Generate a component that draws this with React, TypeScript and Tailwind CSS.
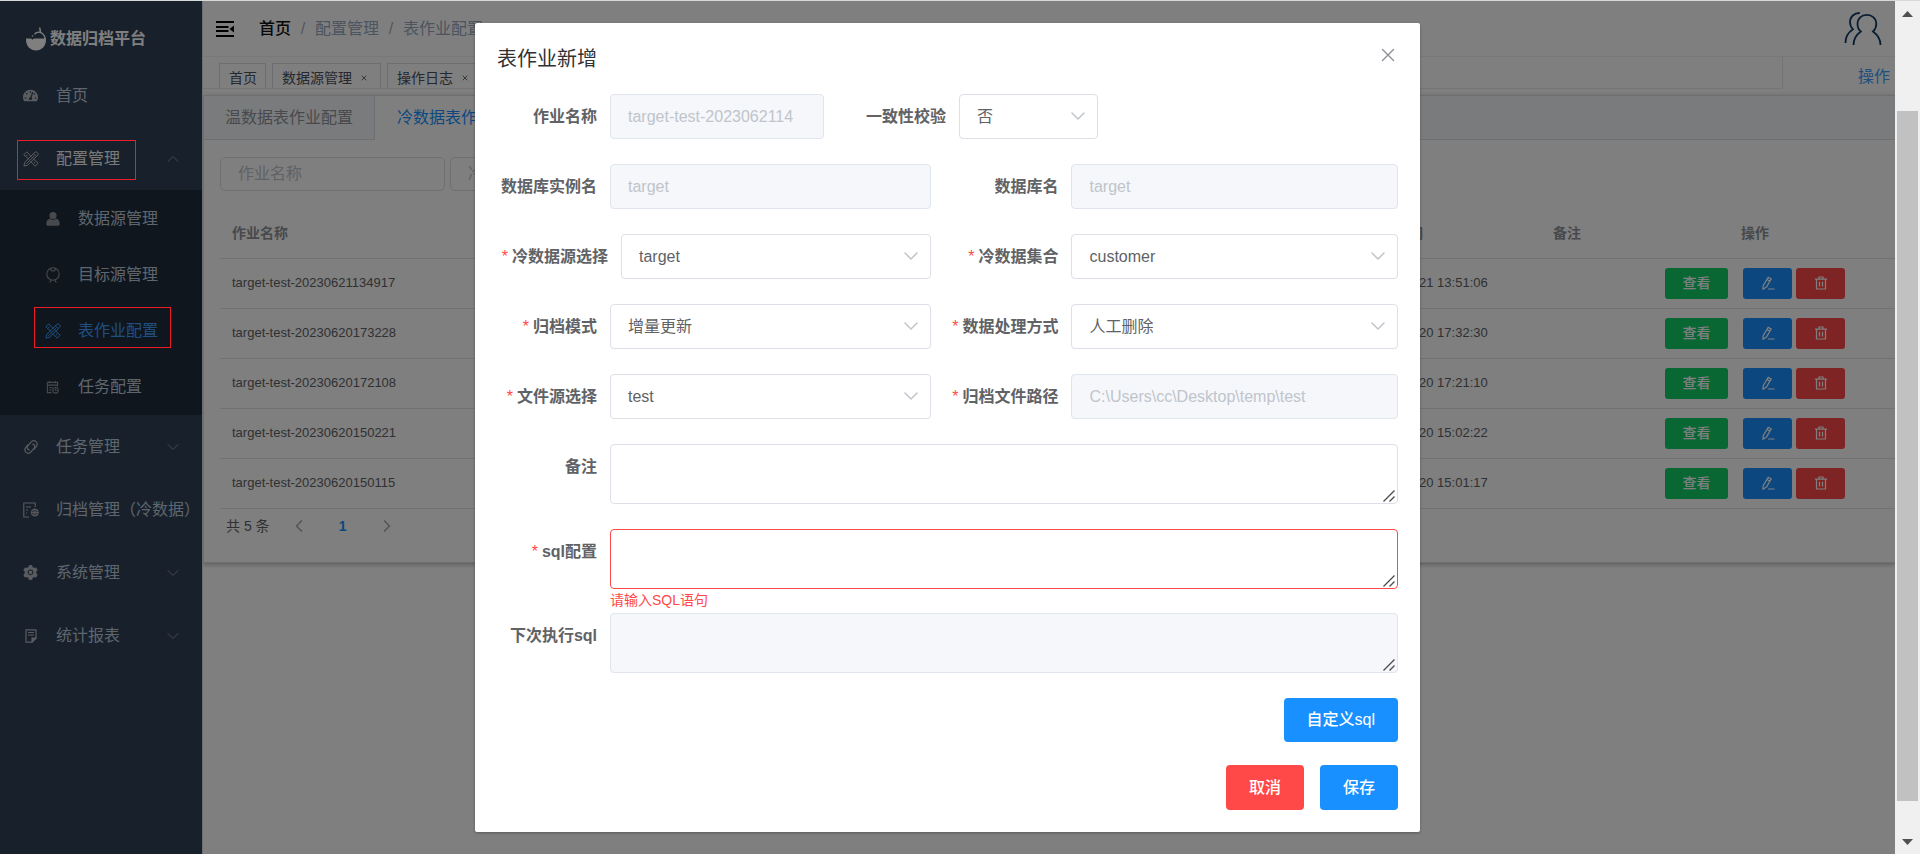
import React from "react";
import { FaTachometerAlt } from "react-icons/fa";
import { AiFillSetting } from "react-icons/ai";
import { ChevronDown, ChevronLeft, ChevronRight, ChevronUp, X } from "lucide-react";

/* ---------- icons ---------- */

type IconProps = { className?: string };

function LogoIcon() {
  return (
    <svg viewBox="0 0 20 26" className="h-[26px] w-5 shrink-0 text-white" fill="currentColor" aria-hidden="true">
      <path d="M0 12.500h5.200l1.200 1.200 1.300-1.200H20c.4 7-4 12-10 12s-10.400-5-10-12Z" />
      <path d="M8.500 8.200c2.500-2.800 6-2.800 8.300-.3 1.200 1.300 1.900 2.500 2.300 3.700l-.6 1.400" fill="none" stroke="currentColor" strokeWidth="1.300" />
      <path d="M14.500 6.300 13.700 1.500" fill="none" stroke="currentColor" strokeWidth="1.500" />
      <circle cx="6.500" cy="10" r=".8" />
    </svg>
  );
}

function ToolsIcon({ className }: IconProps) {
  return (
    <svg viewBox="0 0 16 16" className={className} fill="none" stroke="currentColor" strokeWidth="1" strokeLinejoin="round" aria-hidden="true">
      <path d="M6.200 8.600.8 3.800 3.800.8l4.600 5M9.800 7.400l5.400 4.800-3 3-4.800-5.200M3.200 5l1.200-1.200M10.900 12.200l1.300-1.200" />
      <path d="M12 1.200a1.300 1.300 0 0 1 1.800 0l1 1a1.300 1.300 0 0 1 0 1.800L4.700 14.200.9 15.100l.9-3.800L12 1.200ZM10.400 2.800l2.800 2.800M3.300 12.800l8-8" />
    </svg>
  );
}

function UserIcon({ className }: IconProps) {
  return (
    <svg viewBox="0 0 14 14" className={className} fill="currentColor" aria-hidden="true">
      <circle cx="7" cy="3.700" r="3.600" />
      <path d="M.3 12c0-3 1.500-4.900 3.300-5.200 2 1.500 4.800 1.500 6.800 0 1.800.3 3.300 2.200 3.300 5.200 0 1.100-.6 1.800-1.600 1.800H1.900C.9 13.800.3 13.100.3 12Z" />
    </svg>
  );
}

function MedalIcon({ className }: IconProps) {
  return (
    <svg viewBox="0 0 14 16" className={className} fill="none" stroke="currentColor" strokeWidth="1.100" strokeLinecap="round" aria-hidden="true">
      <circle cx="7" cy="7" r="6.200" />
      <path d="M4.800 1.300v1.500c.5 1.500 3.900 1.500 4.400 0V1.300M5 13l-1 2.300M9 13l1 2.300" />
    </svg>
  );
}

function ScheduleIcon({ className }: IconProps) {
  return (
    <svg viewBox="0 0 14 14" className={className} fill="none" stroke="currentColor" strokeWidth="1.200" aria-hidden="true">
      <path d="M6 12.500H1.500v-11h11V6M1.500 4.500h11M4 0v2.500M10 0v2.500M3.500 7.200H7M3.500 9.800h2" />
      <circle cx="10.200" cy="10" r="3" />
      <path d="M10.200 8.300V10h1.500" />
    </svg>
  );
}

function ClipIcon({ className }: IconProps) {
  return (
    <svg viewBox="0 0 14 14" className={className} fill="none" stroke="currentColor" strokeWidth="1.200" strokeLinecap="round" aria-hidden="true">
      <path d="M5.200 9.900C3.200 9.600 2.600 7.200 4 5.600l2.800-3.300c1.500-1.700 3.700-1.900 5.200-.7s1.600 3.300.2 5l-2 2.400" />
      <path d="M8.800 4.100c2 .3 2.600 2.700 1.200 4.300l-2.800 3.300c-1.500 1.700-3.700 1.900-5.200.7s-1.600-3.300-.2-5l2-2.400" />
    </svg>
  );
}

function ArchiveIcon({ className }: IconProps) {
  return (
    <svg viewBox="0 0 16 16" className={className} fill="none" stroke="currentColor" strokeWidth="1.100" aria-hidden="true">
      <path d="M6 15H.8V1h11.400v4M3 5h5M3 8h2M3 11h1" />
      <circle cx="11.800" cy="10.500" r="3.200" />
      <path d="M7.800 10.500h8M11.800 6.300v8.200M9.200 7.800l5.200 5.400M14.400 7.800l-5.200 5.400" strokeWidth=".9" />
    </svg>
  );
}

function NoteIcon({ className }: IconProps) {
  return (
    <svg viewBox="0 0 12 14" className={className} fill="none" stroke="currentColor" strokeWidth="1.200" aria-hidden="true">
      <path d="M1 .8h10v8.400L7 13.200H1V.8ZM3 3.500h6M3 6h6" />
      <path d="M7 13V9h4Z" fill="currentColor" />
    </svg>
  );
}

function FoldIcon() {
  return (
    <svg viewBox="0 0 18 16" className="h-4 w-[18px]" fill="none" stroke="currentColor" strokeWidth="2" aria-hidden="true">
      <path d="M0 1h18M0 6h12.500M0 10h12.500M0 15h18" />
      <path d="m18 4.500-4.500 3.500 4.500 3.500Z" fill="currentColor" stroke="none" />
    </svg>
  );
}

function PeopleIcon() {
  return (
    <svg viewBox="0 0 38 34" className="h-[34px] w-[38px]" fill="none" stroke="currentColor" strokeWidth="1.800" aria-hidden="true">
      <path d="M9.500 33c0-6 2.500-10 7.300-13.500-2.300-2-3.300-4.500-3.300-7.500 0-5.500 4-9.200 9.300-9.200S32.300 6.500 32.300 12c0 3-1.100 5.500-3.300 7.500C33.800 23 36.500 27 36.500 33" />
      <path d="M15.800 1C10.300.800 6 4.800 6 10c0 3 1 5.300 3 7.300C4 20.500 1.500 25 1.500 31" />
    </svg>
  );
}

function PenIcon() {
  return (
    <svg viewBox="0 0 14 14" className="size-[14px]" fill="none" stroke="currentColor" strokeWidth="1.200" aria-hidden="true">
      <path d="M7.200 1.200 10.200 2.900 5.500 11 2 13.200l.2-3.500 5-8.500ZM6 3.500l2.900 1.700M7 13h6.500" />
    </svg>
  );
}

function TrashIcon() {
  return (
    <svg viewBox="0 0 14 14" className="size-[14px]" fill="none" stroke="currentColor" strokeWidth="1.200" aria-hidden="true">
      <path d="M1 3.200h12M5 3V1h4v2M2.500 3.200v9.800h9V3.200M5.500 5.800v4.700M8.500 5.800v4.700" />
    </svg>
  );
}

/* ---------- side bar ---------- */

function Highlight({ className }: { className: string }) {
  return <span className={`pointer-events-none absolute z-30 border border-[#ee1c24] ${className}`} />;
}

type NavProps = {
  label: string;
  icon: React.ReactNode;
  arrow?: "up" | "down";
  active?: boolean;
  highlighted?: boolean;
};

function NavItem({ label, icon, arrow, active, highlighted }: NavProps) {
  return (
    <li>
      <a href="#" className={`relative flex h-[63px] items-center pl-[22px] whitespace-nowrap ${active ? "text-[#f4f4f5]" : "text-[#bfcbd9]"}`}>
        <span className="mr-[17px] flex w-[17px] justify-center text-[#b4b8bf]">{icon}</span>
        {label}
        {arrow === "up" && <ChevronUp className="mr-[19px] ml-auto size-5 text-[#909399]" strokeWidth={1.2} />}
        {arrow === "down" && <ChevronDown className="mr-[19px] ml-auto size-5 text-[#909399]" strokeWidth={1.2} />}
        {highlighted && <Highlight className="top-[13px] left-[17px] h-10 w-[119px]" />}
      </a>
    </li>
  );
}

function SubItem({ label, icon, active }: NavProps) {
  return (
    <li>
      <a href="#" className={`relative flex h-14 items-center pl-11 ${active ? "text-[#409eff]" : "text-[#bfcbd9]"}`}>
        <span className={`mr-[17px] flex w-[17px] justify-center ${active ? "text-[#409eff]" : "text-[#909399]"}`}>{icon}</span>
        {label}
        {active && <Highlight className="top-1 left-[34px] h-[41px] w-[137px]" />}
      </a>
    </li>
  );
}

function Sidebar() {
  return (
    <aside className="w-[202px] shrink-0 bg-[#304156]">
      <div className="flex h-[63px] items-center gap-1 pt-3 pl-[26px] font-bold text-white">
        <LogoIcon />
        数据归档平台
      </div>
      <nav>
        <ul>
          <NavItem label="首页" icon={<FaTachometerAlt className="size-[15px]" />} />
          <NavItem label="配置管理" icon={<ToolsIcon className="size-4" />} arrow="up" active highlighted />
          <li>
            <ul className="bg-[#1f2d3d] pt-px">
              <SubItem label="数据源管理" icon={<UserIcon className="size-[14px]" />} />
              <SubItem label="目标源管理" icon={<MedalIcon className="h-4 w-[14px]" />} />
              <SubItem label="表作业配置" icon={<ToolsIcon className="size-4" />} active />
              <SubItem label="任务配置" icon={<ScheduleIcon className="size-[13px]" />} />
            </ul>
          </li>
          <NavItem label="任务管理" icon={<ClipIcon className="size-[14px]" />} arrow="down" />
          <NavItem label="归档管理（冷数据）" icon={<ArchiveIcon className="size-4" />} />
          <NavItem label="系统管理" icon={<AiFillSetting className="size-[17px]" />} arrow="down" />
          <NavItem label="统计报表" icon={<NoteIcon className="h-[14px] w-3" />} arrow="down" />
        </ul>
      </nav>
    </aside>
  );
}

/* ---------- main area ---------- */

const rows = [
  { name: "target-test-20230621134917", time: "2023-06-21 13:51:06" },
  { name: "target-test-20230620173228", time: "2023-06-20 17:32:30" },
  { name: "target-test-20230620172108", time: "2023-06-20 17:21:10" },
  { name: "target-test-20230620150221", time: "2023-06-20 15:02:22" },
  { name: "target-test-20230620150115", time: "2023-06-20 15:01:17" },
];

function Tag({ label, closable }: { label: string; closable?: boolean }) {
  return (
    <a href="#" className={`flex h-[25px] items-center gap-2 border border-b-0 border-[#d8dce5] pt-[3px] pl-[9px] text-sm text-[#495060] ${closable ? "pr-3" : "pr-2"}`}>
      {label}
      {closable && <X className="size-2" strokeWidth={2.5} />}
    </a>
  );
}

function TopBar() {
  return (
    <header>
      <div className="flex h-[55px] items-center pr-[13px] pl-[13px]">
        <button type="button" aria-label="折叠菜单" className="text-black">
          <FoldIcon />
        </button>
        <ol className="ml-[25px] flex items-center whitespace-nowrap text-[#97a8be]">
          <li className="font-medium text-[#101113]">首页</li>
          <li className="w-[24px] text-center text-[#a8abb2]">/</li>
          <li>配置管理</li>
          <li className="w-[24px] text-center text-[#a8abb2]">/</li>
          <li>表作业配置</li>
        </ol>
        <button type="button" aria-label="用户" className="ml-auto text-[#123c66]">
          <PeopleIcon />
        </button>
      </div>
      <div className="flex border-t border-[#f0f0f0]">
        <div className="flex h-8 flex-1 items-end gap-[6px] border-r border-b border-[#e6e8ec] pl-4">
          <Tag label="首页" />
          <Tag label="数据源管理" closable />
          <Tag label="操作日志" closable />
        </div>
        <div className="flex h-8 w-[112px] items-center justify-end pt-2 pr-[5px] whitespace-nowrap">
          <a href="#" className="text-[#409eff]">操作</a>
        </div>
      </div>
    </header>
  );
}

function JobTable() {
  return (
    <table className="mt-[17px] w-full table-fixed text-left text-[13px] text-[#606266]">
      <colgroup>
        <col />
        <col className="w-[186px]" />
        <col className="w-[74px]" />
        <col className="w-[280px]" />
      </colgroup>
      <thead>
        <tr className="h-[50px] border-b border-[#dfe6ec] text-sm text-[#909399]">
          <th className="pl-3">作业名称</th>
          <th className="pl-3">创建时间</th>
          <th className="pl-3">备注</th>
          <th className="text-center">操作</th>
        </tr>
      </thead>
      <tbody>
        {rows.map((row) => (
          <tr key={row.name} className="h-[50px] border-b border-[#dfe6ec]">
            <td className="pl-3">{row.name}</td>
            <td className="pl-3">{row.time}</td>
            <td />
            <td>
              <div className="flex justify-center text-sm text-white">
                <button type="button" className="mr-[15px] h-[31px] w-[63px] rounded-[3px] bg-[#13ce66] font-medium">查看</button>
                <button type="button" aria-label="编辑" className="mr-1 flex h-[31px] w-[49px] items-center justify-center rounded-[3px] bg-[#1890ff]">
                  <PenIcon />
                </button>
                <button type="button" aria-label="删除" className="flex h-[31px] w-[49px] items-center justify-center rounded-[3px] bg-[#ff4949]">
                  <TrashIcon />
                </button>
              </div>
            </td>
          </tr>
        ))}
      </tbody>
    </table>
  );
}

function MainPanel() {
  return (
    <main className="min-w-0 flex-1 overflow-hidden border-l border-[#dcdfe6] bg-white">
      <TopBar />
      <section className="mt-[6px] border border-r-0 border-[#dcdfe6] shadow-[0_2px_4px_rgba(0,0,0,0.2),0_0_6px_rgba(0,0,0,0.1)]">
        <div className="flex border-b border-[#dcdfe6] bg-[#f5f7fa]">
          <button type="button" className="h-[43px] px-[21px] text-[#909399]">温数据表作业配置</button>
          <button type="button" className="-mb-px h-11 border-x border-[#dcdfe6] bg-white px-[22px] text-[#1890ff]">冷数据表作业配置</button>
        </div>
        <div className="pt-[17px] pl-4">
          <div className="flex gap-[5px]">
            <input aria-label="作业名称" placeholder="作业名称" className="h-[34px] w-[225px] rounded-[5px] border border-[#dcdfe6] px-[17px] placeholder:text-[#c0c4cc]" />
            <input aria-label="冷数据源" placeholder="冷数据源" className="h-[34px] w-[225px] rounded-[5px] border border-[#dcdfe6] px-[17px] placeholder:text-[#c0c4cc]" />
          </div>
          <JobTable />
          <div className="flex h-[53px] items-start pt-[7px] pl-[6px] text-sm text-[#606266]">
            <span>共 5 条</span>
            <button type="button" aria-label="上一页" className="ml-[21px] flex h-5 w-4 items-center justify-center text-[#a8abb2]"><ChevronLeft className="size-5 shrink-0" /></button>
            <button type="button" className="mx-[26px] w-5 text-center font-bold text-[#1890ff]">1</button>
            <button type="button" aria-label="下一页" className="flex h-5 w-4 items-center justify-center text-[#a8abb2]"><ChevronRight className="size-5 shrink-0" /></button>
          </div>
        </div>
      </section>
    </main>
  );
}

/* ---------- dialog ---------- */

type FieldProps = {
  id: string;
  label: string;
  required?: boolean;
  labelClass?: string;
  children: React.ReactNode;
};

function Field({ id, label, required, labelClass = "w-[113px]", children }: FieldProps) {
  return (
    <div className="flex min-w-0">
      <label htmlFor={id} className={`shrink-0 pr-[13px] text-right leading-[45px] font-bold whitespace-nowrap text-[#606266] ${labelClass}`}>
        {required && <span className="mr-1 font-normal text-[#ff4949]">*</span>}
        {label}
      </label>
      {children}
    </div>
  );
}

function DisabledInput({ id, value, className = "flex-1" }: { id: string; value: string; className?: string }) {
  return (
    <input
      id={id}
      disabled
      defaultValue={value}
      className={`h-[45px] min-w-0 rounded-[4px] border border-[#dfe4ed] bg-[#f5f7fa] px-[17px] text-[#c0c4cc] ${className}`}
    />
  );
}

function Select({ id, value, className = "flex-1" }: { id: string; value: string; className?: string }) {
  return (
    <div className={`relative min-w-0 ${className}`}>
      <select id={id} className="h-[45px] w-full appearance-none rounded-[4px] border border-[#dcdfe6] bg-white px-[17px] text-[#606266]">
        <option>{value}</option>
      </select>
      <ChevronDown className="pointer-events-none absolute top-[10px] right-2 size-6 text-[#c0c4cc]" strokeWidth={1.5} />
    </div>
  );
}

type TextAreaProps = { id: string; className: string; disabled?: boolean; describedBy?: string };

function TextArea({ id, className, disabled, describedBy }: TextAreaProps) {
  return (
    <div className="relative min-w-0 flex-1">
      <textarea id={id} disabled={disabled} aria-describedby={describedBy} className={`block h-[60px] w-full resize-none rounded-[4px] border px-[17px] py-2 ${className}`} />
      <svg viewBox="0 0 12 12" className="pointer-events-none absolute right-[3px] bottom-[2px] size-3" fill="none" stroke="#4a4a4a" strokeWidth="1.300" aria-hidden="true">
        <path d="M.5 11.500 11.500.5M6.500 11.500l5-5" />
      </svg>
    </div>
  );
}

function Dialog() {
  return (
    <div role="dialog" aria-label="表作业新增" className="relative mt-[22px] w-[945px] rounded-[2px] bg-white px-[22px] pb-[22px] shadow-[0_1px_3px_rgba(0,0,0,0.3)]">
      <div className="flex h-[71px] justify-between pt-[22px]">
        <h2 className="text-xl leading-7 text-[#303133]">表作业新增</h2>
        <button type="button" aria-label="关闭" className="flex h-5 w-5 items-center justify-center text-[#909399]">
          <X className="size-[22px] shrink-0" strokeWidth={1.5} />
        </button>
      </div>

      <form className="flex flex-col gap-[25px]">
        <div className="flex">
          <Field id="job-name" label="作业名称">
            <DisabledInput id="job-name" value="target-test-2023062114" className="w-[214px]" />
          </Field>
          <Field id="check" label="一致性校验" labelClass="w-[135px]">
            <Select id="check" value="否" className="w-[139px]" />
          </Field>
        </div>

        <div className="grid grid-cols-[434fr_450fr] gap-x-4 gap-y-[25px]">
          <Field id="instance" label="数据库实例名">
            <DisabledInput id="instance" value="target" />
          </Field>
          <Field id="database" label="数据库名" labelClass="w-[124px]">
            <DisabledInput id="database" value="target" />
          </Field>
          <Field id="cold-source" label="冷数据源选择" required labelClass="w-[124px]">
            <Select id="cold-source" value="target" />
          </Field>
          <Field id="collection" label="冷数据集合" required labelClass="w-[124px]">
            <Select id="collection" value="customer" />
          </Field>
          <Field id="mode" label="归档模式" required>
            <Select id="mode" value="增量更新" />
          </Field>
          <Field id="handling" label="数据处理方式" required labelClass="w-[124px]">
            <Select id="handling" value="人工删除" />
          </Field>
          <Field id="file-source" label="文件源选择" required>
            <Select id="file-source" value="test" />
          </Field>
          <Field id="path" label="归档文件路径" required labelClass="w-[124px]">
            <DisabledInput id="path" value={"C:\\Users\\cc\\Desktop\\temp\\test"} />
          </Field>
        </div>

        <Field id="remark" label="备注">
          <TextArea id="remark" className="border-[#dcdfe6]" />
        </Field>

        <div>
          <Field id="sql" label="sql配置" required>
            <div className="min-w-0 flex-1">
              <TextArea id="sql" describedBy="sql-error" className="border-[#ff4949]" />
              <p id="sql-error" className="h-6 text-sm leading-[22px] text-[#ff4949]">请输入SQL语句</p>
            </div>
          </Field>
          <Field id="next-sql" label="下次执行sql">
            <TextArea id="next-sql" disabled className="border-[#dfe4ed] bg-[#f5f7fa]" />
          </Field>
        </div>

        <div className="flex flex-col items-end gap-[23px] font-medium text-white">
          <button type="button" className="h-11 rounded-[4px] bg-[#1890ff] px-[23px]">自定义sql</button>
          <div className="flex gap-4">
            <button type="button" className="h-[45px] rounded-[4px] bg-[#ff4949] px-[23px]">取消</button>
            <button type="button" className="h-[45px] rounded-[4px] bg-[#1890ff] px-[23px]">保存</button>
          </div>
        </div>
      </form>
    </div>
  );
}

function ScrollTrack() {
  return (
    <div className="flex w-[25px] shrink-0 flex-col items-center bg-[#f0f0f0]" aria-hidden="true">
      <svg viewBox="0 0 11 6" className="mt-[10px] h-[6px] w-[11px] shrink-0" fill="#505050"><path d="M0 6 5.500 0 11 6Z" /></svg>
      <div className="h-[94px] shrink-0" />
      <div className="w-[21px] flex-1 bg-[#c1c1c1]" />
      <div className="h-[38px] shrink-0" />
      <svg viewBox="0 0 11 6" className="mb-[9px] h-[6px] w-[11px] shrink-0" fill="#505050"><path d="M0 0 5.500 6 11 0Z" /></svg>
    </div>
  );
}

export default function App() {
  return (
    <div className="flex min-h-screen border-t border-[#d5dad8] font-['Liberation_Sans','Noto_Sans_CJK_SC',sans-serif] text-base">
      <div className="relative flex min-w-0 flex-1">
        <Sidebar />
        <MainPanel />
        <div className="absolute inset-0 z-20 flex items-start justify-center bg-black/50">
          <Dialog />
        </div>
      </div>
      <ScrollTrack />
    </div>
  );
}
